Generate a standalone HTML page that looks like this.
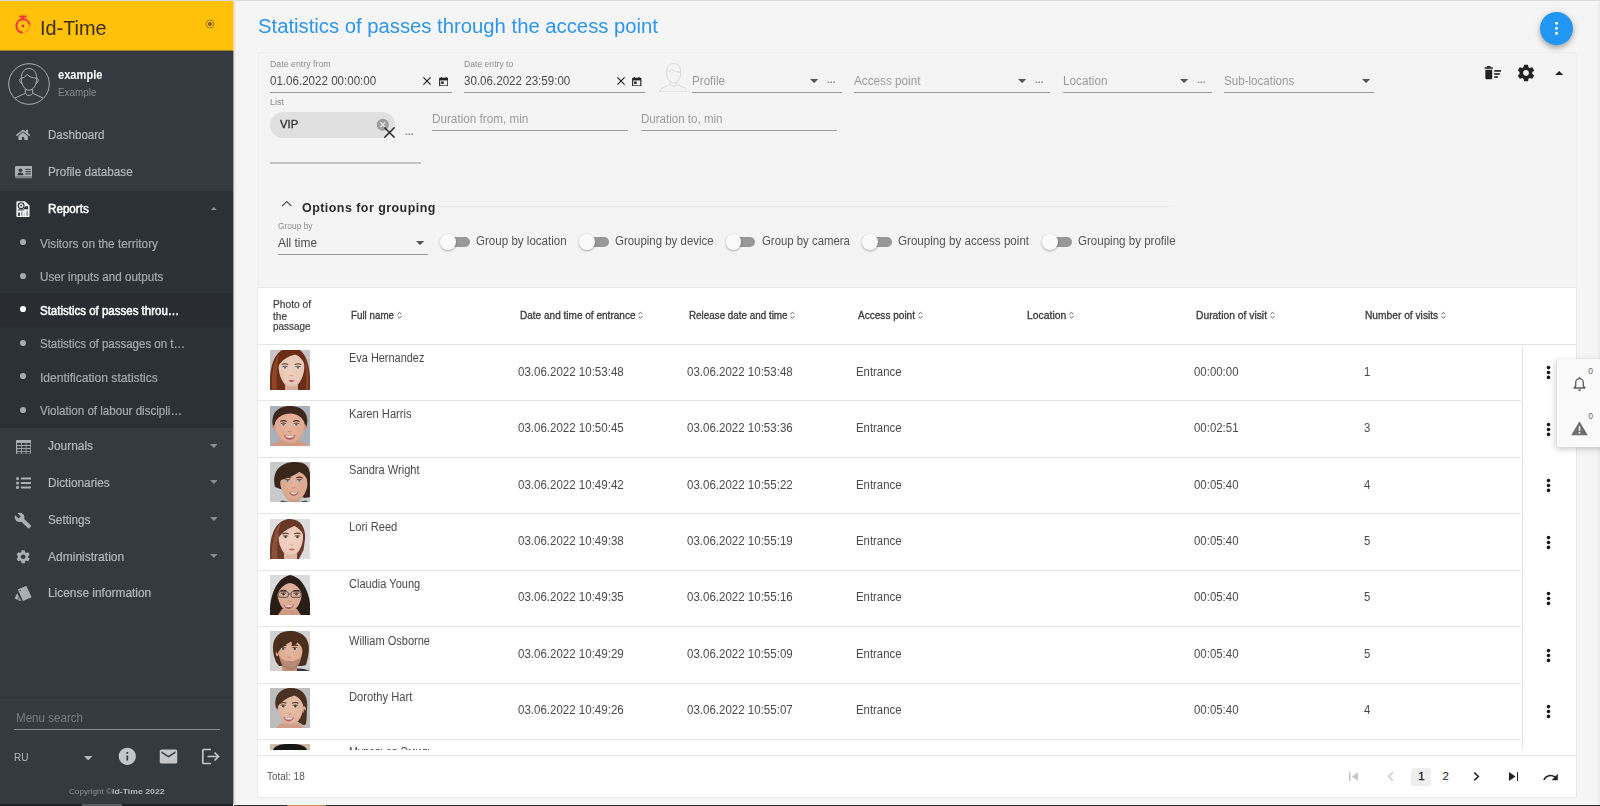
<!DOCTYPE html>
<html lang="en">
<head>
<meta charset="utf-8">
<title>Id-Time</title>
<style>
*{box-sizing:border-box;margin:0;padding:0}
html,body{width:1600px;height:806px;overflow:hidden}
body{font-family:"Liberation Sans",sans-serif;background:#f5f5f5;color:#333;position:relative;font-size:12px}
.abs{position:absolute}
.t{position:absolute;white-space:nowrap;line-height:1;transform-origin:0 50%}
svg{display:block}
/* ---------- sidebar ---------- */
#side{position:absolute;left:0;top:0;width:233px;height:806px;background:#353a41;color:#b8bbbf}
#brand{position:absolute;left:0;top:1px;width:233px;height:49px;background:#ffc10a}
#brand .t{position:absolute;left:40px;top:15px;font-size:20px;line-height:26px;color:#3a2b05;letter-spacing:.2px}
.mi{position:absolute;left:0;width:234px;height:37px}
.mi .tx{position:absolute;left:48px;top:0;line-height:37px;font-size:12px;color:#b9bcc0;white-space:nowrap}
.mi .ic{position:absolute;left:15px;top:10px;width:17px;height:17px}
.mi .ar{position:absolute;left:209px;top:17px;width:0;height:0;border-left:4px solid transparent;border-right:4px solid transparent;border-top:4px solid #7b8086}
.si{position:absolute;left:0;width:234px;height:34px}
.si .dot{position:absolute;left:20px;top:14px;width:6px;height:6px;border-radius:50%;background:#b0b3b7}
.si .tx{position:absolute;left:40px;top:0;line-height:34px;font-size:12px;color:#a9adb2;white-space:nowrap}
.si.act{background:#292d32}
.si.act .tx{color:#fff;font-weight:bold}
.si.act .dot{background:#fff}
/* ---------- main ---------- */
#title{position:absolute;left:258px;top:13px;font-size:19px;line-height:26px;color:#2a94ee;white-space:nowrap}
#fab{position:absolute;left:1540.100px;top:11.700px;width:33px;height:33px;border-radius:50%;background:#2196f3;box-shadow:0 3px 5px rgba(0,0,0,.26),0 1px 9px rgba(0,0,0,.12)}
#filter{position:absolute;left:258px;top:51.500px;width:1318.500px;height:237px;background:#f4f4f4;border:1px solid #ececec;border-radius:3px}
.lbl{position:absolute;font-size:8.5px;color:#8a8a8a;white-space:nowrap;line-height:10px}
.val{position:absolute;font-size:12px;color:#444;white-space:nowrap;line-height:14px}
.ph{position:absolute;font-size:12px;color:#9a9a9a;white-space:nowrap;line-height:14px}
.ul{position:absolute;height:1px;background:#9b9b9b}
.dd{position:absolute;width:0;height:0;border-left:4px solid transparent;border-right:4px solid transparent;border-top:4px solid #555}
.dots{position:absolute;font-size:9px;color:#777;letter-spacing:0;line-height:8px;font-weight:bold}
.tg{position:absolute;height:20px}
.tg .tr{position:absolute;left:3px;top:5px;width:26px;height:11px;border-radius:6px;background:#8f8f8f}
.tg .kn{position:absolute;left:-2px;top:2px;width:16px;height:16px;border-radius:50%;background:#fafafa;box-shadow:0 1px 3px rgba(0,0,0,.35)}
.tg .tt{position:absolute;left:36px;top:2px;font-size:12px;line-height:14px;color:#444;white-space:nowrap}
/* ---------- table ---------- */
#tbl{position:absolute;left:258px;top:288px;width:1318px;height:509px;background:#fff;box-shadow:0 0 0 1px #e9e9e9;overflow:hidden}
.th{position:absolute;font-size:10px;font-weight:bold;color:#4a4a4a;line-height:12px;white-space:nowrap}
.th i{font-style:normal;font-weight:normal;color:#888;font-size:8px;margin-left:3px}
.row{position:absolute;left:0;width:1318px;height:57px}
.row .ln{position:absolute;left:0;top:0;width:1262px;height:1px;background:#e6e6e6}
.row .ph2{position:absolute;left:12px;top:6px;width:40px;height:40px;overflow:hidden}
.row .nm{position:absolute;left:91px;top:8px;font-size:12px;line-height:14px;color:#4a4a4a;white-space:nowrap}
.row .c{position:absolute;top:22px;font-size:12px;line-height:14px;color:#4a4a4a;white-space:nowrap}
.row .kb{position:absolute;left:1287px;top:21px;width:4px}
.kb b{display:block;width:3px;height:3px;border-radius:50%;background:#222;margin-bottom:2px}
</style>
</head>
<body>
<div id="side"><div class="abs" style="left:0;top:0;width:233px;height:1px;background:#d9d9d9"></div><div id="brand">
<svg class="abs" style="left:14px;top:13.500px" width="18" height="20" viewBox="0 0 18 20"><g fill="none" stroke="#f5303d" stroke-width="2" stroke-linecap="round"><path d="M15.600 9.500A6.700 6.700 0 1 0 8 17.600"/><path d="M6.300 1.400h5.400"/><path d="M9 1.800v2.400"/></g><path d="M15.600 9.500a6.700 6.700 0 0 1-4.200 7.600" fill="none" stroke="#fb8a1e" stroke-width="1.800" stroke-linecap="round" opacity=".6"/><circle cx="9" cy="11" r="1.400" fill="#f5303d"/></svg>
<svg class="abs" style="left:205px;top:18px" width="10" height="10" viewBox="0 0 10 10"><circle cx="5" cy="5" r="4" fill="none" stroke="#8a6a10" stroke-width=".8"/><circle cx="5" cy="5" r="2" fill="#7a5c0a"/></svg>
</div><div class="t" style="left:40px;top:18.02px;font-size:20.3px;color:#3b2c06;transform:scaleX(0.9782);">Id-Time</div><svg class="abs" style="left:8px;top:63px" width="42" height="42" viewBox="0 0 42 42"><g fill="none" stroke="#a9adb2" stroke-width="1"><circle cx="21" cy="21" r="20.300"/><path d="M13.300 15.500c0 6.200 3.300 11.700 7.700 11.700s7.700-5.500 7.700-11.700C28.700 9 25.500 5.500 21 5.500S13.300 9 13.300 15.500z"/><path d="M13.400 15.300c2.300-.4 4.600-2 5.600-3.900 2.200 2.300 5.600 3.700 9.600 3.800"/><path d="M13.200 15.600c-1.300-.2-1.700 1-1.400 2.300.3 1.400 1 2.500 2.200 2.600M28.800 15.600c1.300-.2 1.700 1 1.400 2.300-.3 1.400-1 2.500-2.200 2.600"/><path d="M17.300 26v4.300L7 35M24.700 26v4.300L35 35"/><path d="M17.300 30.300c1.600 2.800 5.800 2.800 7.400 0"/></g></svg><div class="t" style="left:58px;top:69.14px;font-size:12px;color:#fff;font-weight:bold;transform:scaleX(0.9265);">example</div><div class="t" style="left:58px;top:86.69px;font-size:11px;color:#868b92;transform:scaleX(0.8996);">Example</div><div class="abs" style="left:16.4px;top:128.6px"><svg viewBox="0 0 576 512" width="14.2" height="11.8" preserveAspectRatio="none"><path fill="#abaeb2" d="M280.4 148.3L96 300.1V464a16 16 0 0 0 16 16l112.1-.3a16 16 0 0 0 15.900-16V368a16 16 0 0 1 16-16h64a16 16 0 0 1 16 16v95.600a16 16 0 0 0 16 16.100L464 480a16 16 0 0 0 16-16V300L295.700 148.300a12.200 12.200 0 0 0-15.300 0zM571.600 251.500L488 182.600V44.100a12 12 0 0 0-12-12h-56a12 12 0 0 0-12 12v72.600L318.500 43a48 48 0 0 0-61 0L4.300 251.500a12 12 0 0 0-1.600 16.900l25.500 31a12 12 0 0 0 16.900 1.600l235.200-193.700a12.200 12.200 0 0 1 15.300 0L530.900 301a12 12 0 0 0 16.900-1.600l25.500-31a12 12 0 0 0-1.700-16.900z"/></svg></div><div class="t" style="left:48px;top:129.04px;font-size:12px;color:#b5b8bc;transform:scaleX(0.9622);-webkit-text-stroke:.2px #b5b8bc;">Dashboard</div><div class="abs" style="left:14.5px;top:165.8px"><svg viewBox="0 0 18 14" width="17.8" height="13.2" preserveAspectRatio="none"><rect x="0" y="0" width="18" height="13" rx="1.200" fill="#abaeb2"/><rect x="0" y="11.300" width="18" height="0.800" fill="#353a41"/><circle cx="5.500" cy="4.600" r="1.900" fill="#353a41"/><path d="M2.400 9.800c0-2 1.400-2.800 3.100-2.800s3.100.8 3.100 2.800z" fill="#353a41"/><rect x="10.500" y="3" width="5.500" height="1.100" fill="#353a41"/><rect x="10.500" y="5.400" width="5.500" height="1.100" fill="#353a41"/><rect x="10.500" y="7.800" width="5.500" height="1.100" fill="#353a41"/></svg></div><div class="t" style="left:48px;top:166.14px;font-size:12px;color:#b5b8bc;transform:scaleX(0.9765);-webkit-text-stroke:.2px #b5b8bc;">Profile database</div><div class="abs" style="left:0;top:191px;width:233px;height:237.300px;background:#2c3137"></div><div class="abs" style="left:16.4px;top:201.1px"><svg viewBox="0 0 14 16" width="13.9" height="16.2" preserveAspectRatio="none"><path d="M1.300 0.200h7.700l4.700 4.300v10.400a.9.900 0 0 1-.9.900H1.300a.9.900 0 0 1-.9-.9V1.100a.9.900 0 0 1 .9-.9z" fill="#f4f4f4"/><circle cx="5.200" cy="4.600" r="2.900" fill="none" stroke="#2c3137" stroke-width="1.100"/><circle cx="5.200" cy="4.600" r=".9" fill="#2c3137"/><path d="M2.500 2.300l1.200 1M7.300 2.400l-1 1" stroke="#2c3137" stroke-width=".9"/><path d="M7.600 7.800L9.300 5.300h2.900v3.100z" fill="#2c3137"/><rect x="1.800" y="8.300" width="6.500" height="1" fill="#2c3137"/><rect x="2.100" y="11.400" width="1.800" height="3.300" fill="#2c3137"/><rect x="5.100" y="10.300" width="1.500" height="4.400" fill="#9a9da1"/><rect x="7.800" y="11.600" width="1.400" height="3.100" fill="#c4c6c9"/><rect x="10.600" y="9.800" width="1.400" height="4.900" fill="#85888d"/></svg></div><div class="t" style="left:48px;top:202.54px;font-size:12px;color:#fff;transform:scaleX(0.9707);-webkit-text-stroke:.5px #fff;">Reports</div><svg class="abs" style="left:209.6px;top:206.55px" width="7.8" height="3.9" viewBox="0 0 7.8 3.9"><path d="M0 3.9 L3.9 0 L7.8 3.9z" fill="#8a8f95"/></svg><div class="abs" style="left:0;top:293.200px;width:233px;height:34.200px;background:#292d32"></div><div class="abs" style="left:20.100px;top:239.2px;width:6.400px;height:6px;border-radius:50%;background:#a6a9ad"></div><div class="t" style="left:40.2px;top:237.84px;font-size:12px;color:#a6aaaf;transform:scaleX(0.9847);-webkit-text-stroke:.2px #a6aaaf;">Visitors on the territory</div><div class="abs" style="left:20.100px;top:272.5px;width:6.400px;height:6px;border-radius:50%;background:#a6a9ad"></div><div class="t" style="left:40.2px;top:271.14px;font-size:12px;color:#a6aaaf;transform:scaleX(0.9728);-webkit-text-stroke:.2px #a6aaaf;">User inputs and outputs</div><div class="abs" style="left:20.100px;top:306.2px;width:6.400px;height:6px;border-radius:50%;background:#fff"></div><div class="t" style="left:40.2px;top:304.84px;font-size:12px;color:#fff;transform:scaleX(0.958);-webkit-text-stroke:.5px #fff;">Statistics of passes throu…</div><div class="abs" style="left:20.100px;top:339.5px;width:6.400px;height:6px;border-radius:50%;background:#a6a9ad"></div><div class="t" style="left:40.2px;top:338.14px;font-size:12px;color:#a6aaaf;transform:scaleX(0.9577);-webkit-text-stroke:.2px #a6aaaf;">Statistics of passages on t…</div><div class="abs" style="left:20.100px;top:373.0px;width:6.400px;height:6px;border-radius:50%;background:#a6a9ad"></div><div class="t" style="left:40.2px;top:371.64px;font-size:12px;color:#a6aaaf;transform:scaleX(1.0093);-webkit-text-stroke:.2px #a6aaaf;">Identification statistics</div><div class="abs" style="left:20.100px;top:406.6px;width:6.400px;height:6px;border-radius:50%;background:#a6a9ad"></div><div class="t" style="left:40.2px;top:405.24px;font-size:12px;color:#a6aaaf;transform:scaleX(0.9647);-webkit-text-stroke:.2px #a6aaaf;">Violation of labour discipli…</div><div class="abs" style="left:15.7px;top:439.7px"><svg viewBox="0 0 16 14" width="15.5" height="14.8" preserveAspectRatio="none"><rect x="0" y="0" width="16" height="14" rx="1" fill="#abaeb2"/><g fill="#353a41"><rect x="1.200" y="2.800" width="4" height="2"/><rect x="6" y="2.800" width="4" height="2"/><rect x="10.800" y="2.800" width="4" height="2"/><rect x="1.200" y="5.700" width="4" height="2"/><rect x="6" y="5.700" width="4" height="2"/><rect x="10.800" y="5.700" width="4" height="2"/><rect x="1.200" y="8.600" width="4" height="2"/><rect x="6" y="8.600" width="4" height="2"/><rect x="10.800" y="8.600" width="4" height="2"/><rect x="1.200" y="11.400" width="4" height="1.600"/><rect x="6" y="11.400" width="4" height="1.600"/><rect x="10.800" y="11.400" width="4" height="1.600"/></g></svg></div><div class="t" style="left:48.3px;top:439.54px;font-size:12px;color:#b5b8bc;transform:scaleX(0.9921);-webkit-text-stroke:.2px #b5b8bc;">Journals</div><svg class="abs" style="left:209.6px;top:443.65px" width="7.8" height="3.9" viewBox="0 0 7.8 3.9"><path d="M0 0 H7.8 L3.9 3.9z" fill="#8a8f95"/></svg><div class="abs" style="left:15.7px;top:476.7px"><svg viewBox="0 0 16 12" width="15.5" height="12" preserveAspectRatio="none"><g fill="#abaeb2"><circle cx="1.600" cy="1.600" r="1.600"/><circle cx="1.600" cy="6" r="1.600"/><circle cx="1.600" cy="10.400" r="1.600"/><rect x="5" y="0.600" width="11" height="2" rx=".4"/><rect x="5" y="5" width="11" height="2" rx=".4"/><rect x="5" y="9.400" width="11" height="2" rx=".4"/></g></svg></div><div class="t" style="left:48.3px;top:477.04px;font-size:12px;color:#b5b8bc;transform:scaleX(0.984);-webkit-text-stroke:.2px #b5b8bc;">Dictionaries</div><svg class="abs" style="left:209.6px;top:480.45px" width="7.8" height="3.9" viewBox="0 0 7.8 3.9"><path d="M0 0 H7.8 L3.9 3.9z" fill="#8a8f95"/></svg><div class="abs" style="left:14.2px;top:511.7px"><svg viewBox="0 0 24 24" width="18" height="17.2" preserveAspectRatio="none"><path fill="#abaeb2" d="M22.700 19l-9.100-9.100c.9-2.300.4-5-1.500-6.900-2-2-5-2.400-7.400-1.300L9 6 6 9 1.600 4.700C.4 7.100.9 10.100 2.900 12.100c1.900 1.900 4.600 2.400 6.900 1.500l9.100 9.100c.4.400 1 .4 1.400 0l2.300-2.300c.5-.4.500-1.100.1-1.400z"/></svg></div><div class="t" style="left:48.3px;top:514.24px;font-size:12px;color:#b5b8bc;transform:scaleX(0.9802);-webkit-text-stroke:.2px #b5b8bc;">Settings</div><svg class="abs" style="left:209.6px;top:517.35px" width="7.8" height="3.9" viewBox="0 0 7.8 3.9"><path d="M0 0 H7.8 L3.9 3.9z" fill="#8a8f95"/></svg><div class="abs" style="left:15.1px;top:548.9px"><svg viewBox="0 0 24 24" width="16.3" height="15.5" preserveAspectRatio="none"><path fill="#abaeb2" d="M19.430 12.980c.04-.32.070-.64.070-.98s-.03-.66-.07-.98l2.110-1.650c.19-.15.240-.42.120-.64l-2-3.460c-.12-.22-.39-.3-.61-.22l-2.490 1c-.52-.4-1.080-.73-1.690-.98l-.38-2.650C14.460 2.180 14.250 2 14 2h-4c-.25 0-.46.180-.49.420l-.38 2.650c-.61.250-1.170.59-1.690.98l-2.490-1c-.23-.09-.49 0-.61.220l-2 3.460c-.13.220-.07.490.12.640l2.110 1.650c-.4.320-.7.650-.7.980s.3.660.7.980l-2.110 1.650c-.19.150-.24.420-.12.640l2 3.460c.12.220.39.300.61.220l2.490-1c.52.400 1.080.73 1.690.98l.38 2.650c.3.240.24.420.49.420h4c.25 0 .46-.18.490-.42l.38-2.650c.61-.25 1.170-.59 1.690-.98l2.490 1c.23.090.49 0 .61-.22l2-3.460c.12-.22.070-.49-.12-.64l-2.110-1.650zM12 15.500c-1.930 0-3.500-1.570-3.500-3.500s1.570-3.500 3.500-3.500 3.500 1.570 3.500 3.500-1.570 3.500-3.500 3.500z"/></svg></div><div class="t" style="left:48.3px;top:550.84px;font-size:12px;color:#b5b8bc;transform:scaleX(1.0022);-webkit-text-stroke:.2px #b5b8bc;">Administration</div><svg class="abs" style="left:209.6px;top:554.25px" width="7.8" height="3.9" viewBox="0 0 7.8 3.9"><path d="M0 0 H7.8 L3.9 3.9z" fill="#8a8f95"/></svg><div class="abs" style="left:14px;top:585px"><svg viewBox="0 0 18 16" width="18" height="16" preserveAspectRatio="none"><g fill="#aaadb1"><path d="M4.300 4.300L11.900 1.100a.6.600 0 0 1 .8.300l4.700 10.400a.6.600 0 0 1-.3.800L9.500 15.800a.6.600 0 0 1-.8-.3L4 5.100a.6.600 0 0 1 .3-.8z"/><path d="M3.200 8.100L.7 13.300l2.600 1.800 1.400-3.700z"/><path d="M4.800 11.600l-.5 3.800 2.900.6z"/></g><circle cx="6.300" cy="5.400" r=".55" fill="#353a41"/></svg></div><div class="t" style="left:48.3px;top:587.14px;font-size:12px;color:#b5b8bc;transform:scaleX(0.9917);-webkit-text-stroke:.2px #b5b8bc;">License information</div><div class="abs" style="left:0;top:697px;width:233px;height:1px;background:#2f343a"></div><div class="t" style="left:16px;top:711.64px;font-size:12px;color:#787d84;transform:scaleX(0.9658);">Menu search</div><div class="abs" style="left:13.800px;top:728.500px;width:206px;height:1.200px;background:#8a8e94"></div><div class="t" style="left:13.5px;top:752.49px;font-size:11px;color:#b5b8bc;transform:scaleX(0.9125);">RU</div><svg class="abs" style="left:84.3px;top:755.75px" width="8.4" height="4.5" viewBox="0 0 8.4 4.5"><path d="M0 0 H8.4 L4.2 4.5z" fill="#b5b8bc"/></svg><svg class="abs" style="left:117.300px;top:746px" width="20.600" height="20.600" viewBox="0 0 24 24"><path fill="#c3c6ca" d="M12 2C6.480 2 2 6.480 2 12s4.480 10 10 10 10-4.480 10-10S17.520 2 12 2zm1 15h-2v-6h2v6zm0-8h-2V7h2v2z"/></svg><svg class="abs" style="left:158.400px;top:745.800px" width="21" height="21" viewBox="0 0 24 24"><path fill="#c3c6ca" d="M20 4H4c-1.100 0-1.990.900-1.990 2L2 18c0 1.100.900 2 2 2h16c1.100 0 2-.900 2-2V6c0-1.100-.900-2-2-2zm0 4l-8 5-8-5V6l8 5 8-5v2z"/></svg><svg class="abs" style="left:200.500px;top:748px" width="19" height="17" viewBox="0 0 19 17"><g fill="none" stroke="#c3c6ca" stroke-width="1.700"><path d="M10 1.500H2.800a1 1 0 0 0-1 1v12a1 1 0 0 0 1 1H10"/><path d="M6.500 8.500h11M13.500 4.500l4 4-4 4"/></g></svg><div class="t" style="left:68.7px;top:787.53px;font-size:8px;color:#8d9299;transform:scaleX(1.0151);">Copyright ©</div><div class="t" style="left:111.9px;top:787.53px;font-size:8px;color:#b5b8bc;font-weight:bold;transform:scaleX(1.0884);">Id-Time 2022</div><div class="abs" style="left:0;top:804.400px;width:233px;height:2px;background:#1e2125"></div><div class="abs" style="left:82px;top:804.400px;width:40px;height:2px;background:#5a5d62"></div><div class="abs" style="left:0;top:50px;width:233px;height:1px;background:#a5841f"></div><div class="abs" style="left:233px;top:1px;width:1px;height:50px;background:#f9d66a"></div><div class="abs" style="left:233px;top:51px;width:1px;height:753px;background:#a3a5a8"></div><div class="abs" style="left:234px;top:1px;width:1px;height:803px;background:#e4e4e4"></div><div class="abs" style="left:235px;top:1px;width:1px;height:803px;background:#eeeeee"></div></div>
<div class="abs" style="left:234px;top:0;width:1366px;height:1px;background:#dcdcdc"></div><div class="t" style="left:257.9px;top:16.47px;font-size:20px;color:#2b95ef;transform:scaleX(1.0135);">Statistics of passes through the access point</div><div id="fab"><svg class="abs" style="left:14.300px;top:9.500px" width="5" height="15" viewBox="0 0 5 15"><g fill="#fff"><circle cx="2.500" cy="2.300" r="1.500"/><circle cx="2.500" cy="7.300" r="1.500"/><circle cx="2.500" cy="12.300" r="1.500"/></g></svg></div><div id="filter"></div><div class="abs" style="left:1597.500px;top:1px;width:3px;height:804px;background:#ededed"></div><div class="t" style="left:270px;top:59.7px;font-size:8.5px;color:#8c8c8c;transform:scaleX(1.0362);">Date entry from</div><div class="t" style="left:270px;top:74.64px;font-size:12px;color:#4d4d4d;transform:scaleX(0.9645);">01.06.2022 00:00:00</div><svg class="abs" style="left:423.2px;top:77.1px" width="8" height="8" viewBox="0 0 8 8"><path d="M.4 .4L7.6 7.6M7.6 .4L.4 7.6" stroke="#222" stroke-width="1.2" fill="none"/></svg><svg class="abs" style="left:438.5px;top:76.6px" width="9.500" height="9.500" viewBox="0 0 10 10"><path d="M1 .9h8a.9.900 0 0 1 .9.900v7.300a.9.900 0 0 1-.9.900H1a.9.900 0 0 1-.9-.9V1.800A.9.900 0 0 1 1 .9z" fill="#222"/><rect x="1.300" y="3.600" width="7.400" height="5.200" fill="#f5f5f5"/><rect x="2.300" y="4.700" width="2.700" height="2.500" fill="#222"/><rect x="2" y="0" width="1.200" height="1.600" fill="#222"/><rect x="6.800" y="0" width="1.200" height="1.600" fill="#222"/></svg><div class="abs" style="left:270px;top:92px;width:182px;height:1px;background:#9a9a9a"></div><div class="t" style="left:463.7px;top:59.7px;font-size:8.5px;color:#8c8c8c;transform:scaleX(1.0129);">Date entry to</div><div class="t" style="left:463.7px;top:74.64px;font-size:12px;color:#4d4d4d;transform:scaleX(0.9654);">30.06.2022 23:59:00</div><svg class="abs" style="left:616.6px;top:77.1px" width="8" height="8" viewBox="0 0 8 8"><path d="M.4 .4L7.6 7.6M7.6 .4L.4 7.6" stroke="#222" stroke-width="1.2" fill="none"/></svg><svg class="abs" style="left:632px;top:76.6px" width="9.500" height="9.500" viewBox="0 0 10 10"><path d="M1 .9h8a.9.900 0 0 1 .9.900v7.300a.9.900 0 0 1-.9.900H1a.9.900 0 0 1-.9-.9V1.800A.9.900 0 0 1 1 .9z" fill="#222"/><rect x="1.300" y="3.600" width="7.400" height="5.200" fill="#f5f5f5"/><rect x="2.300" y="4.700" width="2.700" height="2.500" fill="#222"/><rect x="2" y="0" width="1.200" height="1.600" fill="#222"/><rect x="6.800" y="0" width="1.200" height="1.600" fill="#222"/></svg><div class="abs" style="left:463.7px;top:92px;width:181.3px;height:1px;background:#9a9a9a"></div><svg class="abs" style="left:658.800px;top:62.500px" width="28.500" height="29.500" viewBox="0 0 28.500 29.500"><g fill="none" stroke="#dadada" stroke-width="1"><path d="M7.500 10c0 5 2.900 9.700 7.100 9.700s7.100-4.700 7.100-9.700C21.700 3.800 18.800.6 14.600.6S7.500 3.800 7.500 10z"/><path d="M7.600 9.300c2-.4 4.200-1.900 5.100-3.500 2 2.200 5 3.400 8.900 3.500"/><path d="M11.600 21.600c1.300 2.300 4.700 2.300 6 0"/><path d="M11.600 18.800v2.700L2.700 25.300c-1 .4-1.700 1.300-1.700 2.400v1.300h27.200v-1.300c0-1.100-.7-2-1.700-2.400l-8.900-3.800v-2.700"/></g></svg><div class="t" style="left:692px;top:74.64px;font-size:12px;color:#9b9b9b;transform:scaleX(0.9701);">Profile</div><svg class="abs" style="left:809.7px;top:78.85px" width="8.2" height="4.1" viewBox="0 0 8.2 4.1"><path d="M0 0 H8.2 L4.1 4.1z" fill="#555"/></svg><div class="t" style="left:826.9px;top:75.58px;font-size:9px;color:#8a8a8a;font-weight:bold;transform:scaleX(1.1443);">...</div><div class="abs" style="left:692px;top:92px;width:150px;height:1px;background:#9a9a9a"></div><div class="t" style="left:854.2px;top:74.64px;font-size:12px;color:#9b9b9b;transform:scaleX(0.9773);">Access point</div><svg class="abs" style="left:1017.9px;top:78.85px" width="8.2" height="4.1" viewBox="0 0 8.2 4.1"><path d="M0 0 H8.2 L4.1 4.1z" fill="#555"/></svg><div class="t" style="left:1035.2px;top:75.58px;font-size:9px;color:#8a8a8a;font-weight:bold;transform:scaleX(1.1443);">...</div><div class="abs" style="left:854.2px;top:92px;width:196.3px;height:1px;background:#9a9a9a"></div><div class="t" style="left:1062.5px;top:74.64px;font-size:12px;color:#9b9b9b;transform:scaleX(0.9807);">Location</div><svg class="abs" style="left:1179.7px;top:78.85px" width="8.2" height="4.1" viewBox="0 0 8.2 4.1"><path d="M0 0 H8.2 L4.1 4.1z" fill="#555"/></svg><div class="t" style="left:1196.9px;top:75.58px;font-size:9px;color:#8a8a8a;font-weight:bold;transform:scaleX(1.1443);">...</div><div class="abs" style="left:1062.5px;top:92px;width:149.5px;height:1px;background:#9a9a9a"></div><div class="t" style="left:1224.2px;top:74.64px;font-size:12px;color:#9b9b9b;transform:scaleX(0.9667);">Sub-locations</div><svg class="abs" style="left:1362.4px;top:79.35px" width="8.2" height="4.1" viewBox="0 0 8.2 4.1"><path d="M0 0 H8.2 L4.1 4.1z" fill="#555"/></svg><div class="abs" style="left:1224.2px;top:92px;width:149.6px;height:1px;background:#9a9a9a"></div><svg class="abs" style="left:1483.700px;top:66.200px" width="17.600" height="13.400" viewBox="0 0 18 14"><g fill="#222"><rect x="0.500" y="1.300" width="8.600" height="1.600"/><rect x="3" y="0" width="3.600" height="1.500"/><path d="M1.200 3.800h7.200v8.900a1.100 1.100 0 0 1-1.100 1.100H2.300a1.100 1.100 0 0 1-1.100-1.100z"/><rect x="10.500" y="4.300" width="7.300" height="1.700"/><rect x="10.500" y="7.500" width="5.800" height="1.700"/><rect x="10.500" y="10.700" width="3.800" height="1.700"/></g></svg><svg class="abs" style="left:1515.600px;top:63.100px" width="20" height="20" viewBox="0 0 24 24"><path fill="#222" d="M19.430 12.980c.04-.32.070-.64.070-.98s-.03-.66-.07-.98l2.110-1.650c.19-.15.240-.42.120-.64l-2-3.460c-.12-.22-.39-.3-.61-.22l-2.490 1c-.52-.4-1.080-.73-1.690-.98l-.38-2.650C14.460 2.180 14.250 2 14 2h-4c-.25 0-.46.180-.49.420l-.38 2.650c-.61.250-1.170.59-1.690.98l-2.490-1c-.23-.09-.49 0-.61.220l-2 3.460c-.13.220-.07.490.12.640l2.110 1.650c-.4.320-.7.650-.7.980s.3.660.7.980l-2.110 1.650c-.19.150-.24.420-.12.640l2 3.460c.12.220.39.300.61.220l2.490-1c.52.400 1.080.73 1.690.98l.38 2.650c.3.240.24.420.49.420h4c.25 0 .46-.18.490-.42l.38-2.650c.61-.25 1.170-.59 1.690-.98l2.490 1c.23.090.49 0 .61-.22l2-3.460c.12-.22.070-.49-.12-.64l-2.110-1.650zM12 15.500c-1.930 0-3.500-1.570-3.500-3.500s1.570-3.500 3.500-3.500 3.500 1.570 3.500 3.500-1.570 3.500-3.500 3.500z"/></svg><svg class="abs" style="left:1555.0px;top:70.5px" width="8.4" height="4.2" viewBox="0 0 8.4 4.2"><path d="M0 4.2 L4.2 0 L8.4 4.2z" fill="#222"/></svg><div class="t" style="left:270px;top:98.0px;font-size:8.5px;color:#8c8c8c;transform:scaleX(1.0579);">List</div><div class="abs" style="left:270px;top:112.200px;width:125px;height:26px;border-radius:13px;background:#e0e0e0"></div><div class="t" style="left:280.2px;top:118.97px;font-size:11.5px;color:#333;transform:scaleX(0.9813);-webkit-text-stroke:.35px #333;">VIP</div><svg class="abs" style="left:376.300px;top:118.200px" width="13.500" height="13.500" viewBox="0 0 14 14"><circle cx="7" cy="7" r="6.300" fill="#9e9e9e"/><path d="M4.500 4.500l5 5M9.500 4.500l-5 5" stroke="#e4e4e4" stroke-width="1.400"/></svg><svg class="abs" style="left:383.8px;top:126.80000000000001px" width="11" height="11" viewBox="0 0 11 11"><path d="M.4 .4L10.6 10.6M10.6 .4L.4 10.6" stroke="#222" stroke-width="1.4" fill="none"/></svg><div class="t" style="left:404.7px;top:128.28px;font-size:9px;color:#8a8a8a;font-weight:bold;transform:scaleX(1.1443);">...</div><div class="abs" style="left:270px;top:162px;width:150.5px;height:2px;background:#c3c3c3"></div><div class="t" style="left:432px;top:112.54px;font-size:12px;color:#9b9b9b;transform:scaleX(0.9757);">Duration from, min</div><div class="abs" style="left:432px;top:130px;width:196.3px;height:1px;background:#9a9a9a"></div><div class="t" style="left:640.5px;top:112.54px;font-size:12px;color:#9b9b9b;transform:scaleX(0.9622);">Duration to, min</div><div class="abs" style="left:640.5px;top:130px;width:196.3px;height:1px;background:#9a9a9a"></div><svg class="abs" style="left:280.500px;top:200px" width="11.500" height="7" viewBox="0 0 11.500 7"><path d="M1.200 6l4.550-4.500L10.300 6" stroke="#555" stroke-width="1.200" fill="none"/></svg><div class="t" style="left:302px;top:200.97px;font-size:13.5px;color:#2b2b2b;font-weight:bold;letter-spacing:0.5px;transform:scaleX(0.9229);">Options for grouping</div><div class="abs" style="left:437px;top:206.3px;width:737.5px;height:1px;background:#ececec"></div><div class="t" style="left:278px;top:221.5px;font-size:8.5px;color:#8c8c8c;transform:scaleX(0.9866);">Group by</div><div class="t" style="left:278px;top:236.54px;font-size:12px;color:#4d4d4d;transform:scaleX(0.9913);">All time</div><svg class="abs" style="left:416.2px;top:240.55px" width="8.2" height="4.1" viewBox="0 0 8.2 4.1"><path d="M0 0 H8.2 L4.1 4.1z" fill="#555"/></svg><div class="abs" style="left:278px;top:253.7px;width:149.5px;height:1px;background:#9a9a9a"></div><div class="abs" style="left:448.7px;top:236.800px;width:21px;height:10.400px;border-radius:5.200px;background:#989898"></div><div class="abs" style="left:440px;top:234px;width:15.800px;height:15.800px;border-radius:50%;background:#fafafa;box-shadow:0 1px 2.500px rgba(0,0,0,.32)"></div><div class="t" style="left:475.7px;top:234.84px;font-size:12px;color:#555;transform:scaleX(0.9643);">Group by location</div><div class="abs" style="left:588.1px;top:236.800px;width:21px;height:10.400px;border-radius:5.200px;background:#989898"></div><div class="abs" style="left:579.4px;top:234px;width:15.800px;height:15.800px;border-radius:50%;background:#fafafa;box-shadow:0 1px 2.500px rgba(0,0,0,.32)"></div><div class="t" style="left:614.8000000000001px;top:234.84px;font-size:12px;color:#555;transform:scaleX(0.9535);">Grouping by device</div><div class="abs" style="left:734.4000000000001px;top:236.800px;width:21px;height:10.400px;border-radius:5.200px;background:#989898"></div><div class="abs" style="left:725.7px;top:234px;width:15.800px;height:15.800px;border-radius:50%;background:#fafafa;box-shadow:0 1px 2.500px rgba(0,0,0,.32)"></div><div class="t" style="left:761.7px;top:234.84px;font-size:12px;color:#555;transform:scaleX(0.948);">Group by camera</div><div class="abs" style="left:871.1px;top:236.800px;width:21px;height:10.400px;border-radius:5.200px;background:#989898"></div><div class="abs" style="left:862.4px;top:234px;width:15.800px;height:15.800px;border-radius:50%;background:#fafafa;box-shadow:0 1px 2.500px rgba(0,0,0,.32)"></div><div class="t" style="left:898.0px;top:234.84px;font-size:12px;color:#555;transform:scaleX(0.9681);">Grouping by access point</div><div class="abs" style="left:1050.5px;top:236.800px;width:21px;height:10.400px;border-radius:5.200px;background:#989898"></div><div class="abs" style="left:1041.8px;top:234px;width:15.800px;height:15.800px;border-radius:50%;background:#fafafa;box-shadow:0 1px 2.500px rgba(0,0,0,.32)"></div><div class="t" style="left:1077.5px;top:234.84px;font-size:12px;color:#555;transform:scaleX(0.9626);">Grouping by profile</div><div id="tbl"><div class="t" style="left:14.5px;top:11.11px;font-size:10.5px;color:#3a3a3a;transform:scaleX(0.9712);-webkit-text-stroke:.2px #3a3a3a;">Photo of</div><div class="t" style="left:14.5px;top:22.51px;font-size:10.5px;color:#3a3a3a;transform:scaleX(0.9583);-webkit-text-stroke:.2px #3a3a3a;">the</div><div class="t" style="left:14.5px;top:33.41px;font-size:10.5px;color:#3a3a3a;transform:scaleX(0.9445);-webkit-text-stroke:.2px #3a3a3a;">passage</div><div class="t" style="left:93.2px;top:22.01px;font-size:10.5px;color:#3a3a3a;transform:scaleX(0.9326);-webkit-text-stroke:.3px #3a3a3a;">Full name</div><svg class="abs" style="left:139.0px;top:23px" width="5" height="8.500" viewBox="0 0 5 8.500"><path d="M.6 3.200L2.500 1.300 4.400 3.200M.6 5.300l1.900 1.900 1.900-1.900" stroke="#5a5a5a" stroke-width="1" fill="none"/></svg><div class="t" style="left:262px;top:22.01px;font-size:10.5px;color:#3a3a3a;transform:scaleX(0.9559);-webkit-text-stroke:.3px #3a3a3a;">Date and time of entrance</div><svg class="abs" style="left:380.3px;top:23px" width="5" height="8.500" viewBox="0 0 5 8.500"><path d="M.6 3.200L2.500 1.300 4.400 3.200M.6 5.300l1.900 1.900 1.900-1.900" stroke="#5a5a5a" stroke-width="1" fill="none"/></svg><div class="t" style="left:431px;top:22.01px;font-size:10.5px;color:#3a3a3a;transform:scaleX(0.9374);-webkit-text-stroke:.3px #3a3a3a;">Release date and time</div><svg class="abs" style="left:532.3px;top:23px" width="5" height="8.500" viewBox="0 0 5 8.500"><path d="M.6 3.200L2.500 1.300 4.400 3.200M.6 5.300l1.900 1.900 1.900-1.900" stroke="#5a5a5a" stroke-width="1" fill="none"/></svg><div class="t" style="left:600px;top:22.01px;font-size:10.5px;color:#3a3a3a;transform:scaleX(0.9575);-webkit-text-stroke:.3px #3a3a3a;">Access point</div><svg class="abs" style="left:659.8px;top:23px" width="5" height="8.500" viewBox="0 0 5 8.500"><path d="M.6 3.200L2.500 1.300 4.400 3.200M.6 5.300l1.900 1.900 1.900-1.900" stroke="#5a5a5a" stroke-width="1" fill="none"/></svg><div class="t" style="left:769px;top:22.01px;font-size:10.5px;color:#3a3a3a;transform:scaleX(0.9898);-webkit-text-stroke:.3px #3a3a3a;">Location</div><svg class="abs" style="left:811.1px;top:23px" width="5" height="8.500" viewBox="0 0 5 8.500"><path d="M.6 3.200L2.500 1.300 4.400 3.200M.6 5.300l1.900 1.900 1.900-1.900" stroke="#5a5a5a" stroke-width="1" fill="none"/></svg><div class="t" style="left:938px;top:22.01px;font-size:10.5px;color:#3a3a3a;transform:scaleX(0.981);-webkit-text-stroke:.3px #3a3a3a;">Duration of visit</div><svg class="abs" style="left:1011.8px;top:23px" width="5" height="8.500" viewBox="0 0 5 8.500"><path d="M.6 3.200L2.500 1.300 4.400 3.200M.6 5.300l1.900 1.900 1.900-1.900" stroke="#5a5a5a" stroke-width="1" fill="none"/></svg><div class="t" style="left:1107px;top:22.01px;font-size:10.5px;color:#3a3a3a;transform:scaleX(0.9724);-webkit-text-stroke:.3px #3a3a3a;">Number of visits</div><svg class="abs" style="left:1183.0px;top:23px" width="5" height="8.500" viewBox="0 0 5 8.500"><path d="M.6 3.200L2.500 1.300 4.400 3.200M.6 5.300l1.900 1.900 1.900-1.900" stroke="#5a5a5a" stroke-width="1" fill="none"/></svg><div class="abs" style="left:0;top:56.4px;width:1318px;height:1px;background:#e4e4e4"></div><div class="abs" style="left:1264px;top:57.5px;width:1px;height:404px;background:#e4e4e4"></div><div class="abs" style="left:12px;top:61.9px;width:40px;height:40px;overflow:hidden"><svg width="40" height="40" viewBox="0 0 40 40"><defs><filter id="fb0" x="-10%" y="-10%" width="120%" height="120%"><feGaussianBlur stdDeviation=".6"/></filter><radialGradient id="fg0" cx=".5" cy=".42" r=".62"><stop offset="0" stop-color="#fff" stop-opacity=".14"/><stop offset=".6" stop-color="#fff" stop-opacity="0"/><stop offset="1" stop-color="#40150a" stop-opacity=".28"/></radialGradient></defs><rect width="40" height="40" fill="#c5c5c7"/><g filter="url(#fb0)"><path d="M0 40C-1 22 2 6 12 0h18c8 6 11 22 10 40z" fill="#6b2d19"/><path d="M2 40C1 26 3 12 9 4c-2 10-3 24-2 36zM38.500 40c.5-12 0-24-4-33 2 10 2 22 1.500 33z" fill="#8d4626"/><path d="M15 33h13v7H15z" fill="#d6aa96"/><path d="M8.7 16.1 C8.7 6.08 13.56 2.5 21.5 2.5 C29.44 2.5 34.3 6.08 34.3 16.1 C34.56 26.84 27.9 38.3 21.5 38.3 C15.1 38.3 8.44 26.84 8.7 16.1Z" fill="#ebc9b7"/><path d="M8.7 16.1 C8.7 6.08 13.56 2.5 21.5 2.5 C29.44 2.5 34.3 6.08 34.3 16.1 C34.56 26.84 27.9 38.3 21.5 38.3 C15.1 38.3 8.44 26.84 8.7 16.1Z" fill="url(#fg0)"/><path d="M8 17C7 6 14 0 22 0c8 0 14 6 13.500 17-2-7-6-11-10.500-12.500C19 6 11 10 8 17z" fill="#6b2d19"/><ellipse cx="15" cy="17.6" rx="2.500" ry="1.150" fill="#efe2dc"/><circle cx="15" cy="17.6" r="1.200" fill="#5b7a88"/><path d="M12.3 16.8q2.700-1.500 5.400 0" stroke="#3d2a24" stroke-width=".7" fill="none"/><path d="M11.8 14.5q3.200-1.500 6.400 0" stroke="#6a3826" stroke-width="1.100" fill="none"/><ellipse cx="28" cy="17.6" rx="2.500" ry="1.150" fill="#efe2dc"/><circle cx="28" cy="17.6" r="1.200" fill="#5b7a88"/><path d="M25.3 16.8q2.700-1.500 5.400 0" stroke="#3d2a24" stroke-width=".7" fill="none"/><path d="M24.8 14.5q3.200-1.500 6.400 0" stroke="#6a3826" stroke-width="1.100" fill="none"/><path d="M19.7 25.3q1.800 1.300 3.600 0" stroke="#cb9a86" stroke-width=".9" fill="none"/><path d="M18.2 30.8q3.3-1.500 6.6 0q-3.3 2.400-6.6 0z" fill="#b7545f"/></g></svg></div><div class="t" style="left:90.9px;top:63.79px;font-size:12.3px;color:#4a4a4a;transform:scaleX(0.8895);">Eva Hernandez</div><div class="t" style="left:259.8px;top:78.14px;font-size:12px;color:#4a4a4a;transform:scaleX(0.96);">03.06.2022 10:53:48</div><div class="t" style="left:428.8px;top:78.14px;font-size:12px;color:#4a4a4a;transform:scaleX(0.96);">03.06.2022 10:53:48</div><div class="t" style="left:598px;top:78.14px;font-size:12px;color:#4a4a4a;transform:scaleX(0.9473);">Entrance</div><div class="t" style="left:936px;top:78.14px;font-size:12px;color:#4a4a4a;transform:scaleX(0.9525);">00:00:00</div><div class="t" style="left:1105.7px;top:78.14px;font-size:12px;color:#4a4a4a;transform:scaleX(0.9421);">1</div><svg class="abs" style="left:1287.8px;top:77.1px" width="5" height="15" viewBox="0 0 5 15"><g fill="#1a1a1a"><circle cx="2.500" cy="2.600" r="1.800"/><circle cx="2.500" cy="7.500" r="1.800"/><circle cx="2.500" cy="12.400" r="1.800"/></g></svg><div class="abs" style="left:0;top:112.4px;width:1262.8px;height:1px;background:#e4e4e4"></div><div class="abs" style="left:12px;top:117.7px;width:40px;height:40px;overflow:hidden"><svg width="40" height="40" viewBox="0 0 40 40"><defs><filter id="fb1" x="-10%" y="-10%" width="120%" height="120%"><feGaussianBlur stdDeviation=".6"/></filter><radialGradient id="fg1" cx=".5" cy=".42" r=".62"><stop offset="0" stop-color="#fff" stop-opacity=".14"/><stop offset=".6" stop-color="#fff" stop-opacity="0"/><stop offset="1" stop-color="#40150a" stop-opacity=".28"/></radialGradient></defs><rect width="40" height="40" fill="#a9b0b9"/><g filter="url(#fb1)"><path d="M3 21C0 6 9 0 20 0s20 6 16.500 21l-2 3H5z" fill="#3d281d"/><path d="M9 35h21l10 5H0z" fill="#d29a80"/><ellipse cx="4.800" cy="21.500" rx="1.600" ry="3" fill="#d49a80"/><ellipse cx="34.800" cy="21.500" rx="1.600" ry="3" fill="#d49a80"/><path d="M5 16.99 C5 7.05 10.62 3.5 19.8 3.5 C28.98 3.5 34.6 7.05 34.6 16.99 C34.9 27.64 27.2 39 19.8 39 C12.4 39 4.7 27.64 5 16.99Z" fill="#e3ab91"/><path d="M5 16.99 C5 7.05 10.62 3.5 19.8 3.5 C28.98 3.5 34.6 7.05 34.6 16.99 C34.9 27.64 27.2 39 19.8 39 C12.4 39 4.7 27.64 5 16.99Z" fill="url(#fg1)"/><path d="M4.500 18C3 7 11 1.500 20 1.500S37 7 35 18C32.500 11 27 7.500 20 7.500S7 11 4.500 18z" fill="#3d281d"/><ellipse cx="13.5" cy="18.5" rx="2.500" ry="1.150" fill="#efe2dc"/><circle cx="13.5" cy="18.5" r="1.200" fill="#55626b"/><path d="M10.8 17.7q2.700-1.500 5.400 0" stroke="#3d2a24" stroke-width=".7" fill="none"/><path d="M10.3 15.4q3.200-1.500 6.400 0" stroke="#4a3024" stroke-width="1.100" fill="none"/><ellipse cx="26.4" cy="18.5" rx="2.500" ry="1.150" fill="#efe2dc"/><circle cx="26.4" cy="18.5" r="1.200" fill="#55626b"/><path d="M23.7 17.7q2.700-1.500 5.400 0" stroke="#3d2a24" stroke-width=".7" fill="none"/><path d="M23.2 15.4q3.200-1.500 6.400 0" stroke="#4a3024" stroke-width="1.100" fill="none"/><path d="M18 25.3q1.800 1.300 3.600 0" stroke="#c3876b" stroke-width=".9" fill="none"/><path d="M14.05 29q5.75 1.700 11.5 0q-1.38 4.83-5.75 4.83 t-5.75-4.83z" fill="#b0585c"/><path d="M15.05 29.4q4.75 1.300 9.5 0q-1.15 2.42-4.75 2.42 t-4.75-2.42z" fill="#f6efeb"/></g></svg></div><div class="t" style="left:90.9px;top:119.69px;font-size:12.3px;color:#4a4a4a;transform:scaleX(0.9068);">Karen Harris</div><div class="t" style="left:259.8px;top:134.44px;font-size:12px;color:#4a4a4a;transform:scaleX(0.96);">03.06.2022 10:50:45</div><div class="t" style="left:428.8px;top:134.44px;font-size:12px;color:#4a4a4a;transform:scaleX(0.96);">03.06.2022 10:53:36</div><div class="t" style="left:598px;top:134.44px;font-size:12px;color:#4a4a4a;transform:scaleX(0.9473);">Entrance</div><div class="t" style="left:936px;top:134.44px;font-size:12px;color:#4a4a4a;transform:scaleX(0.9525);">00:02:51</div><div class="t" style="left:1105.7px;top:134.44px;font-size:12px;color:#4a4a4a;transform:scaleX(0.9421);">3</div><svg class="abs" style="left:1287.8px;top:134.1px" width="5" height="15" viewBox="0 0 5 15"><g fill="#1a1a1a"><circle cx="2.500" cy="2.600" r="1.800"/><circle cx="2.500" cy="7.500" r="1.800"/><circle cx="2.500" cy="12.400" r="1.800"/></g></svg><div class="abs" style="left:0;top:168.8px;width:1262.8px;height:1px;background:#e4e4e4"></div><div class="abs" style="left:12px;top:174.1px;width:40px;height:40px;overflow:hidden"><svg width="40" height="40" viewBox="0 0 40 40"><defs><filter id="fb2" x="-10%" y="-10%" width="120%" height="120%"><feGaussianBlur stdDeviation=".6"/></filter><radialGradient id="fg2" cx=".5" cy=".42" r=".62"><stop offset="0" stop-color="#fff" stop-opacity=".14"/><stop offset=".6" stop-color="#fff" stop-opacity="0"/><stop offset="1" stop-color="#40150a" stop-opacity=".28"/></radialGradient></defs><rect width="40" height="40" fill="#c9cacc"/><g filter="url(#fb2)"><path d="M5 25C1 8 12 0 25 0c10 0 15 4 15 14v21l-5 1z" fill="#3a251b"/><path d="M10.2 19.11 C10.2 9.45 15.44 6 24 6 C32.56 6 37.8 9.45 37.8 19.11 C38.08 29.46 30.9 40.5 24 40.5 C17.1 40.5 9.92 29.46 10.2 19.11Z" fill="#dda98f"/><path d="M10.2 19.11 C10.2 9.45 15.44 6 24 6 C32.56 6 37.8 9.45 37.8 19.11 C38.08 29.46 30.9 40.5 24 40.5 C17.1 40.5 9.92 29.46 10.2 19.11Z" fill="url(#fg2)"/><path d="M12 38.500q12 3 24 0l2 1.500H10z" fill="#4c4c52"/><path d="M8 25C5 10 14 1 26 1c9 0 14 5 14 15l-2 4c-2-6-5-9-9-10-5 4-14 7-18 8-1 2-2 4-3 7z" fill="#3a251b"/><path d="M37 18l3-2v18l-3 1c1.200-5 1.200-11 0-17z" fill="#3a251b"/><ellipse cx="17.5" cy="18.8" rx="2.500" ry="1.150" fill="#efe2dc"/><circle cx="17.5" cy="18.8" r="1.200" fill="#58727f"/><path d="M14.8 18q2.700-1.500 5.400 0" stroke="#3d2a24" stroke-width=".7" fill="none"/><path d="M14.3 15.9q3.200-1.500 6.400 0" stroke="#4a3024" stroke-width="1.100" fill="none"/><ellipse cx="29.4" cy="18.8" rx="2.500" ry="1.150" fill="#efe2dc"/><circle cx="29.4" cy="18.8" r="1.200" fill="#58727f"/><path d="M26.7 18q2.700-1.500 5.400 0" stroke="#3d2a24" stroke-width=".7" fill="none"/><path d="M26.2 15.9q3.200-1.500 6.400 0" stroke="#4a3024" stroke-width="1.100" fill="none"/><path d="M21.7 25.5q1.800 1.300 3.600 0" stroke="#bd846a" stroke-width=".9" fill="none"/><path d="M19.05 29.8q4.75 1.700 9.5 0q-1.14 3.99-4.75 3.99 t-4.75-3.99z" fill="#b2605c"/><path d="M20.05 30.2q3.75 1.300 7.5 0q-0.95 1.99-3.75 1.99 t-3.75-1.99z" fill="#f6efeb"/></g></svg></div><div class="t" style="left:90.9px;top:176.19px;font-size:12.3px;color:#4a4a4a;transform:scaleX(0.9008);">Sandra Wright</div><div class="t" style="left:259.8px;top:190.74px;font-size:12px;color:#4a4a4a;transform:scaleX(0.96);">03.06.2022 10:49:42</div><div class="t" style="left:428.8px;top:190.74px;font-size:12px;color:#4a4a4a;transform:scaleX(0.96);">03.06.2022 10:55:22</div><div class="t" style="left:598px;top:190.74px;font-size:12px;color:#4a4a4a;transform:scaleX(0.9473);">Entrance</div><div class="t" style="left:936px;top:190.74px;font-size:12px;color:#4a4a4a;transform:scaleX(0.9525);">00:05:40</div><div class="t" style="left:1105.7px;top:190.74px;font-size:12px;color:#4a4a4a;transform:scaleX(0.9421);">4</div><svg class="abs" style="left:1287.8px;top:190.4px" width="5" height="15" viewBox="0 0 5 15"><g fill="#1a1a1a"><circle cx="2.500" cy="2.600" r="1.800"/><circle cx="2.500" cy="7.500" r="1.800"/><circle cx="2.500" cy="12.400" r="1.800"/></g></svg><div class="abs" style="left:0;top:225.3px;width:1262.8px;height:1px;background:#e4e4e4"></div><div class="abs" style="left:12px;top:230.6px;width:40px;height:40px;overflow:hidden"><svg width="40" height="40" viewBox="0 0 40 40"><defs><filter id="fb3" x="-10%" y="-10%" width="120%" height="120%"><feGaussianBlur stdDeviation=".6"/></filter><radialGradient id="fg3" cx=".5" cy=".42" r=".62"><stop offset="0" stop-color="#fff" stop-opacity=".14"/><stop offset=".6" stop-color="#fff" stop-opacity="0"/><stop offset="1" stop-color="#40150a" stop-opacity=".28"/></radialGradient></defs><rect width="40" height="40" fill="#dddde0"/><g filter="url(#fb3)"><path d="M0 40C-1 20 3 3 18 0c12-1 18 8 17 20l-1.500 11-4.500 9z" fill="#6a3826"/><path d="M1.500 40C1.500 26 4 10 11 3c-3 10-4.500 24-3.500 37z" fill="#8c5038"/><path d="M14 33h13v7H14z" fill="#dfb7a4"/><path d="M8.6 17.54 C8.6 8.3 13.24 5 20.8 5 C28.36 5 33 8.3 33 17.54 C33.24 27.44 26.9 38 20.8 38 C14.7 38 8.36 27.44 8.6 17.54Z" fill="#efcdbc"/><path d="M8.6 17.54 C8.6 8.3 13.24 5 20.8 5 C28.36 5 33 8.3 33 17.54 C33.24 27.44 26.9 38 20.8 38 C14.7 38 8.36 27.44 8.6 17.54Z" fill="url(#fg3)"/><path d="M8.500 19C7 8 13 1.500 21 1.500c8 0 13 5 13 15-3-5-6-8-9.500-9.500C19 9 12 13 8.500 19z" fill="#6a3826"/><ellipse cx="15.5" cy="18" rx="2.500" ry="1.150" fill="#efe2dc"/><circle cx="15.5" cy="18" r="1.200" fill="#4a3a30"/><path d="M12.8 17.2q2.700-1.500 5.400 0" stroke="#3d2a24" stroke-width=".7" fill="none"/><path d="M12.3 14.9q3.200-1.500 6.400 0" stroke="#6a4030" stroke-width="1.100" fill="none"/><ellipse cx="27.4" cy="18" rx="2.500" ry="1.150" fill="#efe2dc"/><circle cx="27.4" cy="18" r="1.200" fill="#4a3a30"/><path d="M24.7 17.2q2.700-1.500 5.400 0" stroke="#3d2a24" stroke-width=".7" fill="none"/><path d="M24.2 14.9q3.200-1.500 6.400 0" stroke="#6a4030" stroke-width="1.100" fill="none"/><path d="M19.7 25.5q1.800 1.300 3.600 0" stroke="#d3a38f" stroke-width=".9" fill="none"/><path d="M18.5 30.2q3.3-1.500 6.6 0q-3.3 2.400-6.6 0z" fill="#c26c6c"/></g></svg></div><div class="t" style="left:90.9px;top:232.89px;font-size:12.3px;color:#4a4a4a;transform:scaleX(0.9057);">Lori Reed</div><div class="t" style="left:259.8px;top:247.04px;font-size:12px;color:#4a4a4a;transform:scaleX(0.96);">03.06.2022 10:49:38</div><div class="t" style="left:428.8px;top:247.04px;font-size:12px;color:#4a4a4a;transform:scaleX(0.96);">03.06.2022 10:55:19</div><div class="t" style="left:598px;top:247.04px;font-size:12px;color:#4a4a4a;transform:scaleX(0.9473);">Entrance</div><div class="t" style="left:936px;top:247.04px;font-size:12px;color:#4a4a4a;transform:scaleX(0.9525);">00:05:40</div><div class="t" style="left:1105.7px;top:247.04px;font-size:12px;color:#4a4a4a;transform:scaleX(0.9421);">5</div><svg class="abs" style="left:1287.8px;top:246.8px" width="5" height="15" viewBox="0 0 5 15"><g fill="#1a1a1a"><circle cx="2.500" cy="2.600" r="1.800"/><circle cx="2.500" cy="7.500" r="1.800"/><circle cx="2.500" cy="12.400" r="1.800"/></g></svg><div class="abs" style="left:0;top:281.7px;width:1262.8px;height:1px;background:#e4e4e4"></div><div class="abs" style="left:12px;top:287.0px;width:40px;height:40px;overflow:hidden"><svg width="40" height="40" viewBox="0 0 40 40"><defs><filter id="fb4" x="-10%" y="-10%" width="120%" height="120%"><feGaussianBlur stdDeviation=".6"/></filter><radialGradient id="fg4" cx=".5" cy=".42" r=".62"><stop offset="0" stop-color="#fff" stop-opacity=".14"/><stop offset=".6" stop-color="#fff" stop-opacity="0"/><stop offset="1" stop-color="#40150a" stop-opacity=".28"/></radialGradient></defs><rect width="40" height="40" fill="#dadbdd"/><g filter="url(#fb4)"><path d="M0 40C-1 28 3 4 20 0c16 3 22 26 20 40z" fill="#2b1b15"/><path d="M12 34h15l4 6H8z" fill="#cd9a82"/><path d="M7.4 17.04 C7.4 7.8 12.04 4.5 19.6 4.5 C27.16 4.5 31.8 7.8 31.8 17.04 C32.04 26.94 25.7 37.5 19.6 37.5 C13.5 37.5 7.16 26.94 7.4 17.04Z" fill="#dcab92"/><path d="M7.4 17.04 C7.4 7.8 12.04 4.5 19.6 4.5 C27.16 4.5 31.8 7.8 31.8 17.04 C32.04 26.94 25.7 37.5 19.6 37.5 C13.5 37.5 7.16 26.94 7.4 17.04Z" fill="url(#fg4)"/><path d="M7 20C5.500 8 12 2 20 2s14 6 12 18c-2-7-6-11-12-12-6 1-10 5-13 12z" fill="#2b1b15"/><ellipse cx="13.5" cy="19.3" rx="2.500" ry="1.150" fill="#efe2dc"/><circle cx="13.5" cy="19.3" r="1.200" fill="#4a3a30"/><path d="M10.8 18.5q2.700-1.500 5.400 0" stroke="#3d2a24" stroke-width=".7" fill="none"/><path d="M10.3 16q3.200-1.500 6.400 0" stroke="#3a2820" stroke-width="1.100" fill="none"/><ellipse cx="26.4" cy="19.3" rx="2.500" ry="1.150" fill="#efe2dc"/><circle cx="26.4" cy="19.3" r="1.200" fill="#4a3a30"/><path d="M23.7 18.5q2.700-1.500 5.400 0" stroke="#3d2a24" stroke-width=".7" fill="none"/><path d="M23.2 16q3.200-1.500 6.400 0" stroke="#3a2820" stroke-width="1.100" fill="none"/><g fill="none" stroke="#5a4640" stroke-width=".95"><rect x="8.300" y="16.700" width="10" height="5.600" rx="1.800"/><rect x="21" y="16.700" width="10" height="5.600" rx="1.800"/><path d="M18.300 19h2.700"/></g><path d="M17.8 25.8q1.800 1.300 3.600 0" stroke="#bd886e" stroke-width=".9" fill="none"/><path d="M13.55 29.5q5.25 1.700 10.5 0q-1.26 4.41-5.25 4.41 t-5.25-4.41z" fill="#b0585c"/><path d="M14.55 29.9q4.25 1.300 8.5 0q-1.05 2.21-4.25 2.21 t-4.25-2.21z" fill="#f6efeb"/></g></svg></div><div class="t" style="left:90.9px;top:289.59px;font-size:12.3px;color:#4a4a4a;transform:scaleX(0.8975);">Claudia Young</div><div class="t" style="left:259.8px;top:303.34px;font-size:12px;color:#4a4a4a;transform:scaleX(0.96);">03.06.2022 10:49:35</div><div class="t" style="left:428.8px;top:303.34px;font-size:12px;color:#4a4a4a;transform:scaleX(0.96);">03.06.2022 10:55:16</div><div class="t" style="left:598px;top:303.34px;font-size:12px;color:#4a4a4a;transform:scaleX(0.9473);">Entrance</div><div class="t" style="left:936px;top:303.34px;font-size:12px;color:#4a4a4a;transform:scaleX(0.9525);">00:05:40</div><div class="t" style="left:1105.7px;top:303.34px;font-size:12px;color:#4a4a4a;transform:scaleX(0.9421);">5</div><svg class="abs" style="left:1287.8px;top:303.4px" width="5" height="15" viewBox="0 0 5 15"><g fill="#1a1a1a"><circle cx="2.500" cy="2.600" r="1.800"/><circle cx="2.500" cy="7.500" r="1.800"/><circle cx="2.500" cy="12.400" r="1.800"/></g></svg><div class="abs" style="left:0;top:338.1px;width:1262.8px;height:1px;background:#e4e4e4"></div><div class="abs" style="left:12px;top:343.4px;width:40px;height:40px;overflow:hidden"><svg width="40" height="40" viewBox="0 0 40 40"><defs><filter id="fb5" x="-10%" y="-10%" width="120%" height="120%"><feGaussianBlur stdDeviation=".6"/></filter><radialGradient id="fg5" cx=".5" cy=".42" r=".62"><stop offset="0" stop-color="#fff" stop-opacity=".14"/><stop offset=".6" stop-color="#fff" stop-opacity="0"/><stop offset="1" stop-color="#40150a" stop-opacity=".28"/></radialGradient></defs><rect width="40" height="40" fill="#d1d1d2"/><g filter="url(#fb5)"><path d="M4 25C0 8 8 0 20 0s22 7 18 26l-2 8-4 1H9l-3-4z" fill="#4b2f1e"/><path d="M24 37l10 1 6 2H22z" fill="#35353b"/><path d="M12 33h15v7H12z" fill="#c79378"/><ellipse cx="7.300" cy="22.500" rx="1.600" ry="2.800" fill="#cf9a80"/><path d="M8.4 17.92 C8.4 8.4 12.96 5 20.4 5 C27.84 5 32.4 8.4 32.4 17.92 C32.64 28.12 26.4 39 20.4 39 C14.4 39 8.16 28.12 8.4 17.92Z" fill="#dfad93"/><path d="M9.500 26q10.500 9 21.500 0c-.5 8-5 13-10.500 13S10 34 9.500 26z" fill="#a87c66" opacity=".75"/><path d="M8.4 17.92 C8.4 8.4 12.96 5 20.4 5 C27.84 5 32.4 8.4 32.4 17.92 C32.64 28.12 26.4 39 20.4 39 C14.4 39 8.16 28.12 8.4 17.92Z" fill="none"/><path d="M8.4 17.92 C8.4 8.4 12.96 5 20.4 5 C27.84 5 32.4 8.4 32.4 17.92 C32.64 28.12 26.4 39 20.4 39 C14.4 39 8.16 28.12 8.4 17.92Z" fill="url(#fg5)"/><path d="M7 23C4.500 9 11 2 21 2c9 0 14 7 13 20-1.500-5-3.500-8.500-6.500-10.500-2 2.500-3.500 3.500-5.500 3.500 0-2 0-3.500-1-4.500-5 3-10 6-14 12.500z" fill="#4b2f1e"/><path d="M33 18c2 4 2 11-.5 16l2-1c2.500-5 2.500-11 1-16z" fill="#4b2f1e"/><ellipse cx="13.2" cy="17.7" rx="2.500" ry="1.150" fill="#efe2dc"/><circle cx="13.2" cy="17.7" r="1.200" fill="#4a3a30"/><path d="M10.5 16.9q2.700-1.500 5.400 0" stroke="#3d2a24" stroke-width=".7" fill="none"/><path d="M10 14.6q3.200-1.500 6.400 0" stroke="#3f2a1e" stroke-width="1.100" fill="none"/><ellipse cx="24.8" cy="17.7" rx="2.500" ry="1.150" fill="#efe2dc"/><circle cx="24.8" cy="17.7" r="1.200" fill="#4a3a30"/><path d="M22.1 16.9q2.700-1.500 5.400 0" stroke="#3d2a24" stroke-width=".7" fill="none"/><path d="M21.6 14.6q3.200-1.500 6.400 0" stroke="#3f2a1e" stroke-width="1.100" fill="none"/><path d="M17.2 25.8q1.800 1.300 3.600 0" stroke="#bf8c72" stroke-width=".9" fill="none"/><path d="M15.8 30.6q3.2-1.500 6.4 0q-3.2 2.400-6.4 0z" fill="#c98088"/></g></svg></div><div class="t" style="left:90.9px;top:346.89px;font-size:12.3px;color:#4a4a4a;transform:scaleX(0.898);">William Osborne</div><div class="t" style="left:259.8px;top:359.64px;font-size:12px;color:#4a4a4a;transform:scaleX(0.96);">03.06.2022 10:49:29</div><div class="t" style="left:428.8px;top:359.64px;font-size:12px;color:#4a4a4a;transform:scaleX(0.96);">03.06.2022 10:55:09</div><div class="t" style="left:598px;top:359.64px;font-size:12px;color:#4a4a4a;transform:scaleX(0.9473);">Entrance</div><div class="t" style="left:936px;top:359.64px;font-size:12px;color:#4a4a4a;transform:scaleX(0.9525);">00:05:40</div><div class="t" style="left:1105.7px;top:359.64px;font-size:12px;color:#4a4a4a;transform:scaleX(0.9421);">5</div><svg class="abs" style="left:1287.8px;top:359.7px" width="5" height="15" viewBox="0 0 5 15"><g fill="#1a1a1a"><circle cx="2.500" cy="2.600" r="1.800"/><circle cx="2.500" cy="7.500" r="1.800"/><circle cx="2.500" cy="12.400" r="1.800"/></g></svg><div class="abs" style="left:0;top:394.5px;width:1262.8px;height:1px;background:#e4e4e4"></div><div class="abs" style="left:12px;top:399.8px;width:40px;height:40px;overflow:hidden"><svg width="40" height="40" viewBox="0 0 40 40"><defs><filter id="fb6" x="-10%" y="-10%" width="120%" height="120%"><feGaussianBlur stdDeviation=".6"/></filter><radialGradient id="fg6" cx=".5" cy=".42" r=".62"><stop offset="0" stop-color="#fff" stop-opacity=".14"/><stop offset=".6" stop-color="#fff" stop-opacity="0"/><stop offset="1" stop-color="#40150a" stop-opacity=".28"/></radialGradient></defs><rect width="40" height="40" fill="#bdbdbe"/><g filter="url(#fb6)"><path d="M6 20C3 7 11 0 21 0s18 6 16 22l-1 14-3 1z" fill="#4a3022"/><path d="M11 35h18l5 5H6z" fill="#d09e86"/><ellipse cx="34.300" cy="21.500" rx="1.700" ry="3.200" fill="#d6a48c"/><path d="M7.8 16.92 C7.8 7.4 12.66 4 20.6 4 C28.54 4 33.4 7.4 33.4 16.92 C33.66 27.12 27 38 20.6 38 C14.2 38 7.54 27.12 7.8 16.92Z" fill="#e4b69e"/><path d="M7.8 16.92 C7.8 7.4 12.66 4 20.6 4 C28.54 4 33.4 7.4 33.4 16.92 C33.66 27.12 27 38 20.6 38 C14.2 38 7.54 27.12 7.8 16.92Z" fill="url(#fg6)"/><path d="M7.500 19C5.500 8 13 1.500 21 1.500S35.500 7 34 19c-2-6.500-5.500-10-9.500-11.500C19 9 11.500 12.500 7.500 19z" fill="#4a3022"/><path d="M33.500 22c1.500 4 1.500 10 0 15l1.800-.5c1.500-5 1.500-10 .2-15z" fill="#4a3022"/><ellipse cx="13.2" cy="18.3" rx="2.500" ry="1.150" fill="#efe2dc"/><circle cx="13.2" cy="18.3" r="1.200" fill="#4a3a30"/><path d="M10.5 17.5q2.700-1.500 5.400 0" stroke="#3d2a24" stroke-width=".7" fill="none"/><path d="M10 15.2q3.200-1.500 6.400 0" stroke="#4a3024" stroke-width="1.100" fill="none"/><ellipse cx="25.3" cy="18.3" rx="2.500" ry="1.150" fill="#efe2dc"/><circle cx="25.3" cy="18.3" r="1.200" fill="#4a3a30"/><path d="M22.6 17.5q2.700-1.500 5.400 0" stroke="#3d2a24" stroke-width=".7" fill="none"/><path d="M22.1 15.2q3.200-1.500 6.400 0" stroke="#4a3024" stroke-width="1.100" fill="none"/><path d="M17.5 25.5q1.800 1.300 3.600 0" stroke="#c69078" stroke-width=".9" fill="none"/><path d="M13.55 29q5.25 1.700 10.5 0q-1.26 4.41-5.25 4.41 t-5.25-4.41z" fill="#b85e62"/><path d="M14.55 29.4q4.25 1.300 8.5 0q-1.05 2.21-4.25 2.21 t-4.25-2.21z" fill="#f6efeb"/></g></svg></div><div class="t" style="left:90.9px;top:403.49px;font-size:12.3px;color:#4a4a4a;transform:scaleX(0.9094);">Dorothy Hart</div><div class="t" style="left:259.8px;top:415.94px;font-size:12px;color:#4a4a4a;transform:scaleX(0.96);">03.06.2022 10:49:26</div><div class="t" style="left:428.8px;top:415.94px;font-size:12px;color:#4a4a4a;transform:scaleX(0.96);">03.06.2022 10:55:07</div><div class="t" style="left:598px;top:415.94px;font-size:12px;color:#4a4a4a;transform:scaleX(0.9473);">Entrance</div><div class="t" style="left:936px;top:415.94px;font-size:12px;color:#4a4a4a;transform:scaleX(0.9525);">00:05:40</div><div class="t" style="left:1105.7px;top:415.94px;font-size:12px;color:#4a4a4a;transform:scaleX(0.9421);">4</div><svg class="abs" style="left:1287.8px;top:416.0px" width="5" height="15" viewBox="0 0 5 15"><g fill="#1a1a1a"><circle cx="2.500" cy="2.600" r="1.800"/><circle cx="2.500" cy="7.500" r="1.800"/><circle cx="2.500" cy="12.400" r="1.800"/></g></svg><div class="abs" style="left:0;top:451.1px;width:1262.8px;height:1px;background:#e4e4e4"></div><div class="abs" style="left:12px;top:456.4px;width:40px;height:40px;overflow:hidden"><svg width="40" height="40" viewBox="0 0 40 40"><defs><filter id="fb7" x="-10%" y="-10%" width="120%" height="120%"><feGaussianBlur stdDeviation=".6"/></filter><radialGradient id="fg7" cx=".5" cy=".42" r=".62"><stop offset="0" stop-color="#fff" stop-opacity=".14"/><stop offset=".6" stop-color="#fff" stop-opacity="0"/><stop offset="1" stop-color="#40150a" stop-opacity=".28"/></radialGradient></defs><rect width="40" height="40" fill="#cdbcaa"/><g filter="url(#fb7)"><path d="M2 9C3 1.500 10 0 20 0s17 1.500 18 9v31H2z" fill="#121212"/></g></svg></div><div class="t" style="left:90.9px;top:457.79px;font-size:12.3px;color:#4a4a4a;transform:scaleX(0.8624);">Муравьев Эмиль</div><div class="abs" style="left:0;top:462.2px;width:1318px;height:50px;background:#fff"></div><div class="abs" style="left:0;top:467px;width:1318px;height:1px;background:#e4e4e4"></div><div class="t" style="left:9.3px;top:482.52px;font-size:11.2px;color:#555;transform:scaleX(0.8913);">Total: 18</div><svg class="abs" style="left:1090.5px;top:483.7px" width="9.500" height="9" viewBox="0 0 9.500 9"><rect x="0" y="0" width="1.500" height="9" fill="#c4c4c4"/><path d="M9.500 0v9L3 4.500z" fill="#c4c4c4"/></svg><svg class="abs" style="left:1129px;top:483.7px" width="7" height="9" viewBox="0 0 7 9"><path d="M5.800 .6L1.600 4.500 5.800 8.400" stroke="#c4c4c4" stroke-width="1.400" fill="none"/></svg><div class="abs" style="left:1153px;top:479.8px;width:19.800px;height:17.800px;border-radius:2.500px;background:#eeeeee"></div><div class="t" style="left:1160.2px;top:483.27px;font-size:11.5px;color:#222;transform:scaleX(1);-webkit-text-stroke:.3px #222;">1</div><div class="t" style="left:1184.4px;top:483.27px;font-size:11.5px;color:#222;transform:scaleX(1);">2</div><svg class="abs" style="left:1215.2px;top:483.7px" width="7" height="9" viewBox="0 0 7 9"><path d="M1.200 .6L5.400 4.500 1.200 8.400" stroke="#222" stroke-width="1.500" fill="none"/></svg><svg class="abs" style="left:1250.8px;top:483.7px" width="9.500" height="9" viewBox="0 0 9.500 9"><rect x="8" y="0" width="1.500" height="9" fill="#222"/><path d="M0 0v9L6.500 4.500z" fill="#222"/></svg><svg class="abs" style="left:1285.4px;top:484.8px" width="15" height="8" viewBox="0 0 15 8"><path d="M.8 6.800C3 2.500 8 1.200 12 4" stroke="#222" stroke-width="1.700" fill="none"/><path d="M14.800 .8v6.400H8.600z" fill="#222"/></svg></div><div class="abs" style="left:1556.600px;top:358.600px;width:50px;height:88.800px;background:#fafafa;border-radius:2px;box-shadow:-1px 2px 6px rgba(0,0,0,.22)"></div><svg class="abs" style="left:1572.500px;top:376px" width="13" height="15.500" viewBox="0 0 13 15.500"><path d="M1 12h11l-1.700-2V6.500a3.800 3.800 0 0 0-7.600 0V10z" fill="none" stroke="#5c5c5c" stroke-width="1.300" stroke-linejoin="round"/><path d="M5 13.600a1.500 1.500 0 0 0 3 0z" fill="#5c5c5c"/><path d="M6.500 .8v2" stroke="#5c5c5c" stroke-width="1.300"/></svg><div class="t" style="left:1588.3px;top:366.6px;font-size:8.5px;color:#666;transform:scaleX(1);">0</div><svg class="abs" style="left:1570.700px;top:421.200px" width="17" height="14.500" viewBox="0 0 17 14.500"><path d="M8.500 .3L16.800 14.300H.2z" fill="#6e6e6e"/><rect x="7.700" y="5.300" width="1.600" height="4.700" fill="#fafafa"/><rect x="7.700" y="11" width="1.600" height="1.600" fill="#fafafa"/></svg><div class="t" style="left:1588.3px;top:411.6px;font-size:8.5px;color:#666;transform:scaleX(1);">0</div><div class="abs" style="left:234px;top:804.500px;width:1366px;height:2px;background:#2b2b2b"></div><div class="abs" style="left:287px;top:804.500px;width:39px;height:2px;background:#c98d52"></div>
</body>
</html>
